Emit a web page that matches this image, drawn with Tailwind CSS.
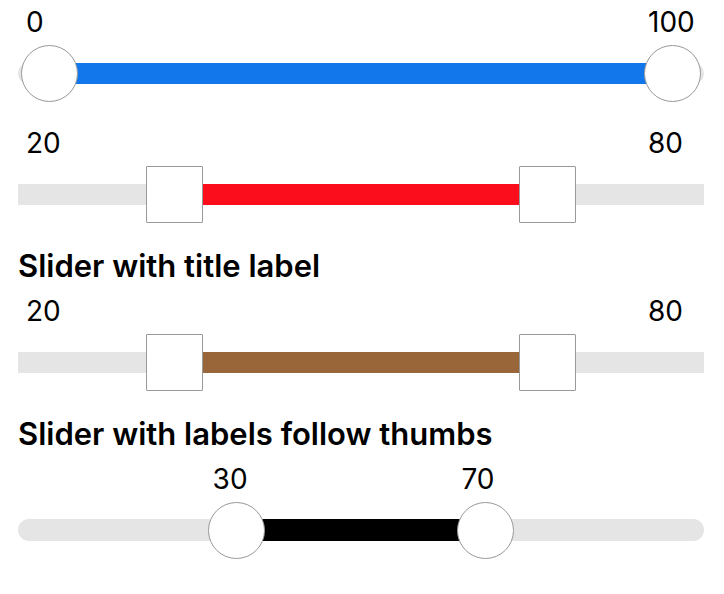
<!DOCTYPE html>
<html lang="en">
<head>
<meta charset="utf-8">
<meta name="viewport" content="width=device-width, initial-scale=1">
<title>Range sliders</title>
<script src="https://cdn.jsdelivr.net/npm/@tailwindcss/browser@4"></script>
</head>
<body class="bg-white font-['Inter',sans-serif] text-black">
<main class="flex flex-col gap-[19px] pr-5 pl-[18px]">

  <section data-slider aria-label="Slider">
    <div class="grid h-11 pr-14 pl-2 text-[28px] leading-[44px]" style="grid-template-columns: 0% 100% 0%">
      <label for="a-low" class="col-start-2">0</label>
      <label for="a-high" class="col-start-3">100</label>
    </div>
    <div class="relative flex h-[58px] items-center">
      <div class="h-[21px] w-full rounded-full bg-[#e5e5e5] px-8">
        <div data-fill class="h-full bg-[#1377ec]" style="margin-left: 0%; width: 100%"></div>
      </div>
      <div class="pointer-events-none absolute inset-x-[3px] inset-y-0">
        <input id="a-low" type="range" min="0" max="100" value="0" class="absolute inset-0 h-full w-full appearance-none bg-transparent [&::-webkit-slider-thumb]:pointer-events-auto [&::-webkit-slider-thumb]:size-[57px] [&::-webkit-slider-thumb]:appearance-none [&::-webkit-slider-thumb]:rounded-full [&::-webkit-slider-thumb]:border [&::-webkit-slider-thumb]:border-[#999] [&::-webkit-slider-thumb]:bg-white">
        <input id="a-high" type="range" min="0" max="100" value="100" class="absolute inset-0 h-full w-full appearance-none bg-transparent [&::-webkit-slider-thumb]:pointer-events-auto [&::-webkit-slider-thumb]:size-[57px] [&::-webkit-slider-thumb]:appearance-none [&::-webkit-slider-thumb]:rounded-full [&::-webkit-slider-thumb]:border [&::-webkit-slider-thumb]:border-[#999] [&::-webkit-slider-thumb]:bg-white">
      </div>
    </div>
  </section>

  <section data-slider aria-label="Slider with square thumbs">
    <div class="grid h-11 pr-14 pl-2 text-[28px] leading-[44px]" style="grid-template-columns: 0% 100% 0%">
      <label for="b-low" class="col-start-2">20</label>
      <label for="b-high" class="col-start-3">80</label>
    </div>
    <div class="relative flex h-[58px] items-center">
      <div class="h-[21px] w-full bg-[#e5e5e5] px-8">
        <div data-fill class="h-full bg-[#fc0d1b]" style="margin-left: 20%; width: 60%"></div>
      </div>
      <div class="pointer-events-none absolute inset-x-[3px] inset-y-0">
        <input id="b-low" type="range" min="0" max="100" value="20" class="absolute inset-0 h-full w-full appearance-none bg-transparent [&::-webkit-slider-thumb]:pointer-events-auto [&::-webkit-slider-thumb]:size-[57px] [&::-webkit-slider-thumb]:appearance-none [&::-webkit-slider-thumb]:rounded-[1px] [&::-webkit-slider-thumb]:border [&::-webkit-slider-thumb]:border-[#999] [&::-webkit-slider-thumb]:bg-white">
        <input id="b-high" type="range" min="0" max="100" value="80" class="absolute inset-0 h-full w-full appearance-none bg-transparent [&::-webkit-slider-thumb]:pointer-events-auto [&::-webkit-slider-thumb]:size-[57px] [&::-webkit-slider-thumb]:appearance-none [&::-webkit-slider-thumb]:rounded-[1px] [&::-webkit-slider-thumb]:border [&::-webkit-slider-thumb]:border-[#999] [&::-webkit-slider-thumb]:bg-white">
      </div>
    </div>
  </section>

  <section data-slider aria-labelledby="c-title">
    <h2 id="c-title" class="h-[47px] text-[31px] leading-[48px] font-semibold">Slider with title label</h2>
    <div class="grid h-11 pr-14 pl-2 text-[28px] leading-[44px]" style="grid-template-columns: 0% 100% 0%">
      <label for="c-low" class="col-start-2">20</label>
      <label for="c-high" class="col-start-3">80</label>
    </div>
    <div class="relative flex h-[58px] items-center">
      <div class="h-[21px] w-full bg-[#e5e5e5] px-8">
        <div data-fill class="h-full bg-[#996639]" style="margin-left: 20%; width: 60%"></div>
      </div>
      <div class="pointer-events-none absolute inset-x-[3px] inset-y-0">
        <input id="c-low" type="range" min="0" max="100" value="20" class="absolute inset-0 h-full w-full appearance-none bg-transparent [&::-webkit-slider-thumb]:pointer-events-auto [&::-webkit-slider-thumb]:size-[57px] [&::-webkit-slider-thumb]:appearance-none [&::-webkit-slider-thumb]:rounded-[1px] [&::-webkit-slider-thumb]:border [&::-webkit-slider-thumb]:border-[#999] [&::-webkit-slider-thumb]:bg-white">
        <input id="c-high" type="range" min="0" max="100" value="80" class="absolute inset-0 h-full w-full appearance-none bg-transparent [&::-webkit-slider-thumb]:pointer-events-auto [&::-webkit-slider-thumb]:size-[57px] [&::-webkit-slider-thumb]:appearance-none [&::-webkit-slider-thumb]:rounded-[1px] [&::-webkit-slider-thumb]:border [&::-webkit-slider-thumb]:border-[#999] [&::-webkit-slider-thumb]:bg-white">
      </div>
    </div>
  </section>

  <section data-slider aria-labelledby="d-title">
    <h2 id="d-title" class="h-[47px] text-[31px] leading-[48px] font-semibold">Slider with labels follow thumbs</h2>
    <div data-follow class="grid h-11 pr-14 pl-2 text-[28px] leading-[44px]" style="grid-template-columns: 30% 40% 30%">
      <label for="d-low" class="col-start-2">30</label>
      <label for="d-high" class="col-start-3">70</label>
    </div>
    <div class="relative flex h-[58px] items-center">
      <div class="h-[22px] w-full rounded-full bg-[#e5e5e5] px-8">
        <div data-fill class="h-full bg-black" style="margin-left: 30%; width: 40%"></div>
      </div>
      <div class="pointer-events-none absolute inset-x-[3px] inset-y-0">
        <input id="d-low" type="range" min="0" max="100" value="30" class="absolute inset-0 h-full w-full appearance-none bg-transparent [&::-webkit-slider-thumb]:pointer-events-auto [&::-webkit-slider-thumb]:size-[57px] [&::-webkit-slider-thumb]:appearance-none [&::-webkit-slider-thumb]:rounded-full [&::-webkit-slider-thumb]:border [&::-webkit-slider-thumb]:border-[#999] [&::-webkit-slider-thumb]:bg-white">
        <input id="d-high" type="range" min="0" max="100" value="70" class="absolute inset-0 h-full w-full appearance-none bg-transparent [&::-webkit-slider-thumb]:pointer-events-auto [&::-webkit-slider-thumb]:size-[57px] [&::-webkit-slider-thumb]:appearance-none [&::-webkit-slider-thumb]:rounded-full [&::-webkit-slider-thumb]:border [&::-webkit-slider-thumb]:border-[#999] [&::-webkit-slider-thumb]:bg-white">
      </div>
    </div>
  </section>

</main>
<script>
  // Keep the fill and the value labels in step with each pair of thumbs.
  document.querySelectorAll('[data-slider]').forEach((slider) => {
    const [low, high] = slider.querySelectorAll('input');
    const labels = slider.querySelectorAll('label');
    const fill = slider.querySelector('[data-fill]');
    const follow = slider.querySelector('[data-follow]');
    slider.addEventListener('input', (event) => {
      if (+low.value > +high.value) {
        if (event.target === low) low.value = high.value;
        else high.value = low.value;
      }
      labels[0].textContent = low.value;
      labels[1].textContent = high.value;
      fill.style.marginLeft = low.value + '%';
      fill.style.width = high.value - low.value + '%';
      if (follow) {
        follow.style.gridTemplateColumns = `${low.value}% ${high.value - low.value}% ${100 - high.value}%`;
      }
    });
  });
</script>
</body>
</html>
